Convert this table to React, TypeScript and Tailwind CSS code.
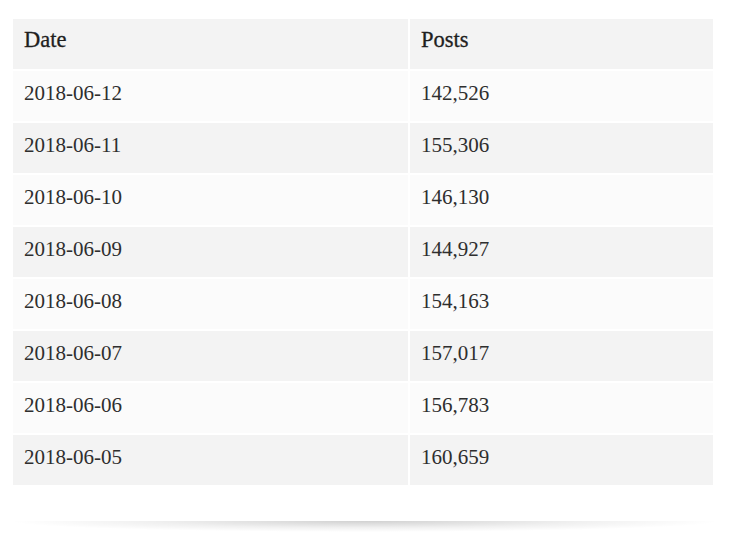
const rows: [string, string][] = [
  ["2018-06-12", "142,526"],
  ["2018-06-11", "155,306"],
  ["2018-06-10", "146,130"],
  ["2018-06-09", "144,927"],
  ["2018-06-08", "154,163"],
  ["2018-06-07", "157,017"],
  ["2018-06-06", "156,783"],
  ["2018-06-05", "160,659"],
];

export default function App() {
  return (
    <div className="min-h-screen bg-white px-[13px] pt-[19px] font-['Liberation_Serif',serif] text-[21px] text-[#2e2e2e]">
      {/* Table */}
      <div className="grid w-[700px] grid-cols-[395px_303px] gap-[2px]">
        <div className="h-[50px] bg-[#f3f3f3] pl-[11px] pt-[9px] text-[22.5px] leading-[24px] text-[#1f1f1f] [-webkit-text-stroke:0.3px_#1f1f1f]">Date</div>
        <div className="h-[50px] bg-[#f3f3f3] pl-[11px] pt-[9px] text-[22.5px] leading-[24px] text-[#1f1f1f] [-webkit-text-stroke:0.3px_#1f1f1f]">Posts</div>
        {rows.map(([date, posts], i) => {
          const bg = i % 2 === 0 ? "bg-[#fbfbfb]" : "bg-[#f3f3f3]";
          return (
            <div key={date} className="contents">
              <div className={`h-[50px] ${bg} pl-[11px] pt-[10px] leading-[24px]`}>{date}</div>
              <div className={`h-[50px] ${bg} pl-[11px] pt-[10px] leading-[24px]`}>{posts}</div>
            </div>
          );
        })}
      </div>

      {/* Curved card shadow */}
      <div className="-ml-[3px] mt-[36px] h-[11px] w-[710px] bg-[radial-gradient(ellipse_50%_100%_at_50%_0%,rgba(0,0,0,0.18),rgba(0,0,0,0.06)_60%,transparent_100%)]" />
    </div>
  );
}
